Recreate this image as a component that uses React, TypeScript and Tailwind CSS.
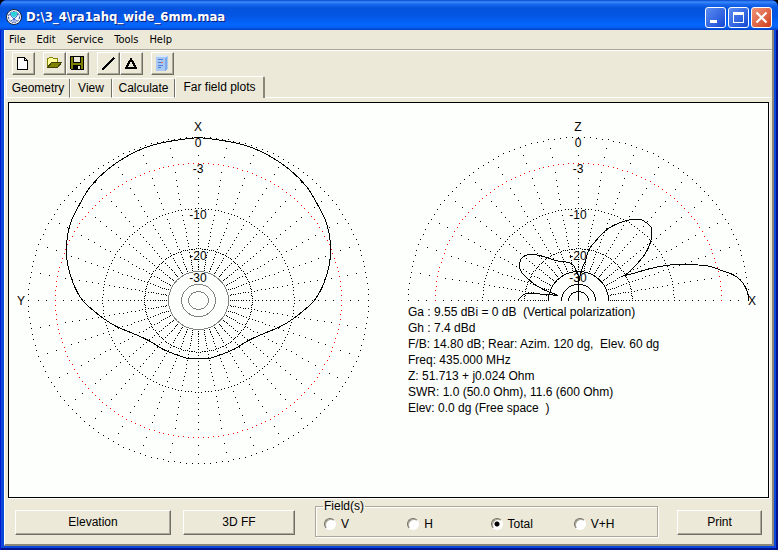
import { useState } from "react";
import type { ReactNode } from "react";

const RX = 170;
const RY = 163;

type Point = [number, number];

// points are offsets from the centre of the plot
const azimuthHalf: Point[] = [
    [0, -163], [17, -161], [35, -158], [53, -153], [72, -144], [91, -131], [108, -114], [119, -96],
    [127, -80], [131, -65], [132, -50], [131, -37], [128, -25], [124, -14], [118, -3], [111, 5],
    [95, 18], [82, 26], [63, 34], [50, 40], [35, 49], [23, 54], [10, 58], [0, 58],
];

const azimuthLobes: Point[][] = [
    [...azimuthHalf, ...azimuthHalf.slice(0, -1).map(([x, y]): Point => [-x, y]).reverse()],
];

const elevationLobes: Point[][] = [
    [
        [170, 0], [170, -3], [168, -11], [164, -18], [159, -23], [152, -27], [143, -30], [132, -34],
        [113, -36], [100, -36], [87, -35], [72, -32], [58, -28], [43, -24],
    ],
    [
        [43, -24], [50, -28], [64, -43], [70, -53], [73, -63], [73, -72], [70, -76], [66, -79],
        [62, -81], [53, -81], [45, -79], [33, -74], [25, -68], [15, -57], [10, -50], [7, -40],
        [4, -33], [2, -26], [0, -16], [0, 0],
    ],
    [
        [0, 0], [0, -23], [-3, -31], [-5, -35], [-10, -38], [-23, -40], [-35, -44], [-46, -46],
        [-55, -44], [-59, -37], [-58, -30], [-53, -24], [-45, -17], [-35, -11], [-28, -8], [-20, -5],
    ],
    [[-20, -5], [-32, -6], [-52, -7], [-58, -3], [-61, 0]],
];

const info = [
    "Ga : 9.55 dBi = 0 dB  (Vertical polarization)",
    "Gh : 7.4 dBd",
    "F/B: 14.80 dB; Rear: Azim. 120 dg,  Elev. 60 dg",
    "Freq: 435.000 MHz",
    "Z: 51.713 + j0.024 Ohm",
    "SWR: 1.0 (50.0 Ohm), 11.6 (600 Ohm)",
    "Elev: 0.0 dg (Free space  )",
];

const levelLabels = [
    { text: "0", y: -153 },
    { text: "-3", y: -127 },
    { text: "-10", y: -81 },
    { text: "-20", y: -40 },
    { text: "-30", y: -18 },
];

const level = (db: number) => Math.pow(10, db / 40);

function dot(angle: number, r: number) {
    const a = (angle * Math.PI) / 180;
    return `M${Math.round(RX * r * Math.cos(a))} ${Math.round(-RY * r * Math.sin(a))}h1v1h-1z`;
}

function ringDots(db: number, sweep: number) {
    let d = "";
    for (let a = 0; a <= sweep; a += 2) d += dot(a, level(db));
    return d;
}

// one dot per dB along each spoke
function spokeDots(sweep: number) {
    let d = "";
    for (let a = 0; a <= sweep; a += 10) {
        for (let db = 0; db >= -30; db--) d += dot(a, level(db));
    }
    return d;
}

// Catmull-Rom through the points of one lobe
function smooth(pts: Point[]) {
    let d = `M${pts[0][0]} ${pts[0][1]}`;
    for (let i = 0; i < pts.length - 1; i++) {
        const p0 = pts[i - 1] ?? pts[i];
        const p1 = pts[i];
        const p2 = pts[i + 1];
        const p3 = pts[i + 2] ?? p2;
        d += `C${p1[0] + (p2[0] - p0[0]) / 6} ${p1[1] + (p2[1] - p0[1]) / 6} ${p2[0] - (p3[0] - p1[0]) / 6} ${p2[1] - (p3[1] - p1[1]) / 6} ${p2[0]} ${p2[1]}`;
    }
    return d;
}

function PolarGrid({ half = false }: { half?: boolean }) {
    const sweep = half ? 180 : 360;
    return (
        <g shapeRendering="crispEdges">
            <path d={spokeDots(sweep) + ringDots(0, sweep) + ringDots(-10, sweep) + ringDots(-20, sweep)} fill="#000" />
            <path d={ringDots(-3, sweep)} fill="#f00" />
            {[-30, -40, -50].map((db) => {
                const rx = Math.round(RX * level(db));
                const ry = Math.round(RY * level(db));
                return (
                    <path
                        key={db}
                        d={`M${-rx} 0A${rx} ${ry} 0 0 1 ${rx} 0` + (half ? "" : `A${rx} ${ry} 0 0 1 ${-rx} 0`)}
                        transform="translate(.5 .5)"
                        fill="none"
                        stroke={half ? "#000" : "#808080"}
                    />
                );
            })}
        </g>
    );
}

function Pattern({ lobes }: { lobes: Point[][] }) {
    return (
        <path
            d={lobes.map(smooth).join("")}
            transform="translate(.5 .5)"
            fill="none"
            stroke="#000"
            shapeRendering="crispEdges"
        />
    );
}

function LevelLabels({ axis }: { axis: string }) {
    return (
        <g textAnchor="middle">
            <text x="0" y="-169">{axis}</text>
            {levelLabels.map((l) => (
                <text key={l.text} x="0" y={l.y}>{l.text}</text>
            ))}
        </g>
    );
}

function ToolButton({ label, children }: { label: string; children: ReactNode }) {
    return (
        <button
            aria-label={label}
            className="flex h-[23px] w-[23px] items-center justify-center border border-t-white border-l-white border-r-[#716f64] border-b-[#716f64] shadow-[inset_-1px_-1px_0_#aca899]"
        >
            <svg width="17" height="17" viewBox="0 0 17 17" shapeRendering="crispEdges">{children}</svg>
        </button>
    );
}

function PushButton({ className, children }: { className: string; children: ReactNode }) {
    return (
        <button
            className={`h-[25px] border border-t-white border-l-white border-r-[#716f64] border-b-[#716f64] pb-px shadow-[inset_-1px_-1px_0_#aca899] ${className}`}
        >
            {children}
        </button>
    );
}

function AppIcon() {
    return (
        <svg width="16" height="16" viewBox="0 0 16 16">
            <circle cx="8" cy="8" r="7.5" fill="#fff" stroke="#123" />
            <circle cx="8" cy="8" r="5.5" fill="#f4faff" stroke="#26389c" strokeDasharray="2 1" />
            <path d="M5 3h6v3l-3 3-3-3z" fill="#2cd0d8" />
            <path d="M4 4l1 3 3 3 3-3 1-3M8 10v3M5 12l3-2 3 2" fill="none" stroke="#2a46c0" strokeWidth=".8" />
        </svg>
    );
}

function TitleBar() {
    const btn = "flex h-[21px] w-[21px] items-center justify-center rounded-[3px] border border-white";
    return (
        <header className="flex h-[30px] items-center rounded-t-[7px] bg-[linear-gradient(#0645cc_0,#3b8dfb_2px,#1c6af0_4px,#0453dc_8px,#0356e4_16px,#0465fc_24px,#0463f8_27px,#0340c4_30px)] px-[6px] pt-1">
            <AppIcon />
            <h1 className="ml-1 font-['DejaVu_Sans_Condensed','Open_Sans',sans-serif] text-[13px] leading-4 font-bold text-white [text-shadow:1px_1px_0_#0a1f80]">
                D:\3_4\ra1ahq_wide_6mm.maa
            </h1>
            <div className="ml-auto flex gap-[2px]">
                <button aria-label="Minimize" className={`${btn} bg-linear-to-br from-[#5d8cf4] to-[#1447d2]`}>
                    <svg width="19" height="19" viewBox="0 0 19 19"><path d="M4 12h7v3H4z" fill="#fff" /></svg>
                </button>
                <button aria-label="Maximize" className={`${btn} bg-linear-to-br from-[#5d8cf4] to-[#1447d2]`}>
                    <svg width="19" height="19" viewBox="0 0 19 19"><path d="M4 4h11v11H4zM5 7v7h9V7z" fill="#fff" fillRule="evenodd" /></svg>
                </button>
                <button aria-label="Close" className={`${btn} bg-linear-to-br from-[#ee9478] to-[#cf3a12]`}>
                    <svg width="19" height="19" viewBox="0 0 19 19"><path d="M4.500 4.500l10 10M14.500 4.500l-10 10" stroke="#fff" strokeWidth="2.2" /></svg>
                </button>
            </div>
        </header>
    );
}

function Toolbar() {
    return (
        <div className="flex h-[26px] gap-2 border-t border-white pt-px pl-[7px]">
            <ToolButton label="New">
                <path d="M2.500 2.500h7l3 3v9h-10zM9.500 2.500v3h3" fill="#fff" stroke="#000" />
            </ToolButton>
            <div className="flex">
                <ToolButton label="Open">
                    <path d="M1.500 12.500v-9h1l1-1h3l1 1h4v3" fill="#ffff9c" stroke="#808000" />
                    <path d="M1.500 12.500l4-5h10l-4 5z" fill="#808000" stroke="#404000" />
                </ToolButton>
                <ToolButton label="Save">
                    <path d="M1.500 1.500h13v13h-12l-1-1z" fill="#808000" stroke="#000" />
                    <path d="M4.500 1.500h7v6h-7z" fill="#ece9d8" stroke="#000" />
                    <path d="M4 10h8v5H4z" fill="#000" />
                    <path d="M9 11h2v3H9z" fill="#ece9d8" />
                </ToolButton>
            </div>
            <div className="flex">
                <ToolButton label="Wire">
                    <path d="M2 15L14 3" fill="none" stroke="#000" strokeWidth="2" />
                </ToolButton>
                <ToolButton label="Element">
                    <path d="M8 4L3 13h10z" fill="none" stroke="#000" strokeWidth="2" />
                </ToolButton>
            </div>
            <ToolButton label="Notebook">
                <path d="M2 1l10-1 2 1v13l-3 2H2z" fill="#a9c8f4" />
                <path d="M2 1l2-1h10l-2 2H2z" fill="#dbe9fc" />
                <path d="M11 3l2-2v13l-2 2z" fill="#7da8ea" />
                <path d="M4 4.500h5M4 7.500h3M4 10.500h5M4 12.500h3" fill="none" stroke="#4a7fd6" />
                <path d="M7 7h2v1H7z" fill="#e06a5a" />
            </ToolButton>
        </div>
    );
}

function Tabs() {
    const [active, setActive] = useState("Far field plots");
    const tabs = [
        { name: "Geometry", width: "w-[64px]" },
        { name: "View", width: "w-[42px]" },
        { name: "Calculate", width: "w-[63px]" },
        { name: "Far field plots", width: "w-[90px]" },
    ];
    return (
        <nav role="tablist" className="flex h-[22px] items-end pl-px">
            {tabs.map((t) => (
                <button
                    key={t.name}
                    role="tab"
                    aria-selected={t.name === active}
                    onClick={() => setActive(t.name)}
                    className={`${t.width} rounded-t-[2px] border-t border-l border-white whitespace-nowrap ${
                        t.name === active
                            ? "h-[22px] border-r-2 border-r-[#8a877a] pb-px"
                            : "h-[20px] border-r border-b border-r-[#716f64]"
                    }`}
                >
                    {t.name}
                </button>
            ))}
            <div className="h-px flex-1 bg-white" />
        </nav>
    );
}

function FieldGroup() {
    const [field, setField] = useState("Total");
    return (
        <fieldset className="ml-5 h-[39px] w-[343px] border border-[#aca899] pl-2 shadow-[1px_1px_0_#fff,inset_1px_1px_0_#fff]">
            <legend className="-ml-px px-px leading-4">Field(s)</legend>
            <div className="grid grid-cols-4">
                {["V", "H", "Total", "V+H"].map((f) => (
                    <label key={f} className="flex h-5 items-center gap-[5px]">
                        <input
                            type="radio"
                            name="field"
                            checked={f === field}
                            onChange={() => setField(f)}
                            className="h-3 w-3 appearance-none rounded-full border border-t-[#716f64] border-r-white border-b-white border-l-[#716f64] bg-white shadow-[inset_1px_1px_0_#aca899] checked:bg-[radial-gradient(circle,#000_2px,#fff_3px)]"
                        />
                        {f}
                    </label>
                ))}
            </div>
        </fieldset>
    );
}

export default function App() {
    return (
        <div className="bg-black font-['Liberation_Sans',Arial,sans-serif] text-[12px] leading-4 text-black">
            <div className="flex min-h-screen flex-col rounded-t-[7px] bg-[#0a48dc] shadow-[inset_1px_0_0_#0019cf,inset_-2px_-2px_0_#00138c]">
                <TitleBar />
                <div className="mx-1 mb-1 flex flex-1 flex-col border-r-2 border-b-2 border-l border-r-[#8a877a] border-b-[#8a877a] border-l-white bg-[#ece9d8]">
                    <nav className="flex h-5 items-center gap-[11px] border-b border-[#aca899] pl-1 font-['DejaVu_Sans_Condensed','Open_Sans',sans-serif] text-[11px]">
                        {["File", "Edit", "Service", "Tools", "Help"].map((m) => (
                            <button key={m}>{m}</button>
                        ))}
                    </nav>
                    <Toolbar />
                    <Tabs />
                    <main className="mx-[3px] mt-1 flex flex-1 items-start gap-[38px] border border-black bg-[#fdfffc] pt-[17px] pl-2 shadow-[1px_1px_0_#fff]">
                        <svg width="353" height="346" viewBox="-181 -180 353 346" className="shrink-0">
                            <PolarGrid />
                            <Pattern lobes={azimuthLobes} />
                            <LevelLabels axis="X" />
                            <text x="-181" y="5">Y</text>
                        </svg>
                        <section className="shrink-0">
                            <svg width="356" height="184" viewBox="-170 -180 356 184" className="overflow-visible">
                                <PolarGrid half />
                                <Pattern lobes={elevationLobes} />
                                <LevelLabels axis="Z" />
                                <text x="170" y="5">X</text>
                            </svg>
                            {info.map((line) => (
                                <p key={line} className="whitespace-pre">{line}</p>
                            ))}
                        </section>
                    </main>
                    <footer className="flex h-[46px] items-start pr-[10px] pl-[10px]">
                        <PushButton className="mt-3 w-[156px]">Elevation</PushButton>
                        <PushButton className="mt-3 ml-3 w-[112px]">3D FF</PushButton>
                        <FieldGroup />
                        <PushButton className="mt-3 ml-auto w-[85px]">Print</PushButton>
                    </footer>
                </div>
            </div>
        </div>
    );
}
